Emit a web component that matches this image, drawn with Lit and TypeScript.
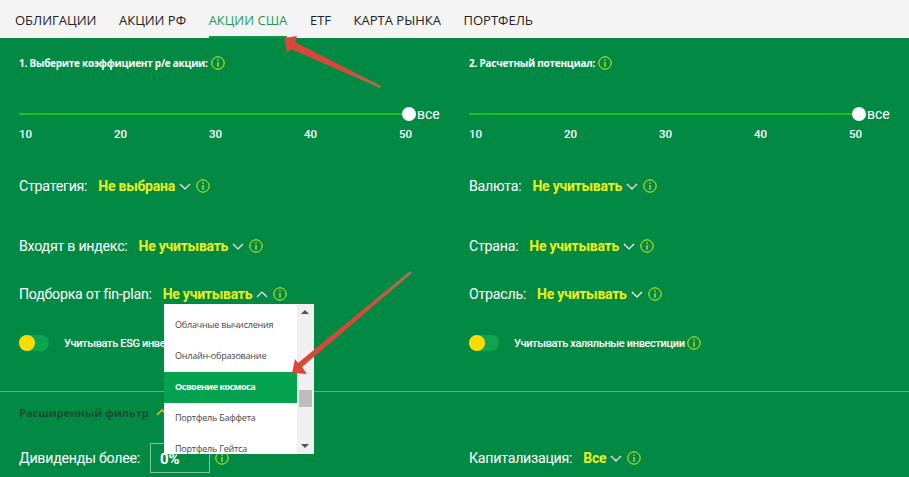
import {css, html, LitElement, svg} from "lit";
import {customElement} from "lit/decorators.js";

const tabs = ["ОБЛИГАЦИИ", "АКЦИИ РФ", "АКЦИИ США", "ETF", "КАРТА РЫНКА", "ПОРТФЕЛЬ"];
const ticks = [10, 20, 30, 40, 50];
const options = ["Облачные вычисления", "Онлайн-образование", "Освоение космоса", "Портфель Баффета", "Портфель Гейтса"];

const info = html`<svg class="info" viewBox="0 0 14 14" width="14" height="14">
  <circle cx="7" cy="7" r="6.2" fill="none" stroke="#d8f01c" stroke-width="1"></circle>
  <path d="M7 3.2v1.6M7 6v4.8" stroke="#d8f01c" stroke-width="1.2" fill="none"></path>
</svg>`;

const chevron = (up = false) => html`<svg class="chev" viewBox="0 0 12 7" width="12" height="7">
  <path d=${up ? "M1 6l5-5 5 5" : "M1 1l5 5 5-5"} fill="none" stroke="#fff" stroke-width="1.2"></path>
</svg>`;

@customElement("app-root")
export class AppRoot extends LitElement {
  static override styles = css`
    :host {
      display: block;
      position: relative;
      width: 909px;
      height: 477px;
      overflow: hidden;
      background: #028a44;
      font-family: "Roboto", sans-serif;
      color: #fff;
    }
    .tabs {
      display: flex;
      gap: 22.6px;
      height: 38px;
      padding-left: 15px;
      background: #f4f4f4;
      color: #222;
      font-family: "Open Sans", sans-serif;
      font-size: 13px;
      box-sizing: border-box;
    }
    .tab {
      height: 38px;
      line-height: 40px;
      box-sizing: border-box;
    }
    .tab.active {
      color: #1f9a56;
      font-weight: 500;
      border-bottom: 2px solid #14934e;
    }
    .row {
      display: grid;
      grid-template-columns: 450px 440px;
      padding-left: 19px;
      align-items: center;
    }
    .h50 { height: 50px; }
    .h58 { height: 58px; }
    .h80 { height: 80px; }
    .h40 { height: 40px; }
    .h56 { height: 56px; }
    .h42 { height: 42px; }
    .adv { height: 38px; margin-top: 1px; }
    .last { height: 40px; margin-top: 7px; }
    .title {
      display: flex;
      align-items: center;
      gap: 3px;
      font-family: "Open Sans", sans-serif;
      font-size: 10px;
      font-weight: 700;
      letter-spacing: -0.25px;
    }
    .slider {
      align-self: start;
      padding-top: 19px;
    }
    .track {
      display: flex;
      align-items: center;
      height: 14px;
    }
    .line {
      flex: none;
      width: 383px;
      height: 2px;
      background: #1cc41c;
    }
    .knob {
      width: 14px;
      height: 14px;
      border-radius: 50%;
      background: #fff;
      flex: none;
    }
    .all {
      margin-left: 1px;
      font-size: 14px;
      line-height: 14px;
    }
    .ticks {
      display: flex;
      margin-top: 6px;
      font-size: 11.5px;
      font-weight: 500;
      line-height: 14px;
    }
    .ticks span {
      flex: none;
      width: 95px;
    }
    .filter {
      display: flex;
      align-items: center;
      font-size: 14.2px;
      letter-spacing: -0.25px;
      position: relative;
    }
    .value {
      margin-left: 11px;
      color: #ecf01a;
      font-weight: 700;
      font-size: 14px;
    }
    .chev { margin-left: 4px; flex: none; }
    .info { margin-left: 5px; flex: none; }
    .title .info { margin-left: 0; }
    .toggle {
      display: flex;
      align-items: center;
      font-size: 11px;
      font-weight: 500;
      letter-spacing: -0.35px;
    }
    .switch {
      width: 30px;
      height: 16px;
      border-radius: 8px;
      background: #0da350;
      margin-right: 15px;
      flex: none;
    }
    .switch i {
      display: block;
      width: 16px;
      height: 16px;
      border-radius: 50%;
      background: #ffdc00;
    }
    .toggle .info { margin-left: 2px; }
    .divider {
      height: 1px;
      margin-top: 27px;
      background: rgba(255, 255, 255, 0.35);
    }
    .adv-title {
      display: flex;
      align-items: center;
      font-family: "Open Sans", sans-serif;
      font-size: 11px;
      font-weight: 700;
      color: #1c4a33;
    }
    .adv-title .chev { margin-left: 7px; }
    .input {
      width: 60px;
      height: 30px;
      margin-left: 10px;
      border: 1px solid rgba(255, 255, 255, 0.5);
      box-sizing: border-box;
      padding-left: 9px;
      font-size: 15px;
      font-weight: 700;
      line-height: 30px;
    }
    .dropdown {
      position: absolute;
      left: 164px;
      top: 304px;
      width: 150px;
      height: 150px;
      display: flex;
      background: #fff;
      overflow: hidden;
      color: #444;
    }
    .list {
      width: 133px;
      padding-top: 6px;
      font-family: "Open Sans", sans-serif;
      font-size: 9px;
      letter-spacing: -0.2px;
    }
    .option {
      height: 31px;
      line-height: 29px;
      padding-left: 11px;
      white-space: nowrap;
    }
    .option.selected {
      background: #05a24f;
      color: #fff;
      font-weight: 700;
      letter-spacing: -0.45px;
    }
    .bar {
      position: relative;
      width: 17px;
      background: #f0f0f0;
    }
    .thumb {
      position: absolute;
      left: 2px;
      top: 86px;
      width: 13px;
      height: 17px;
      background: #bdbdbd;
    }
    .step {
      position: absolute;
      left: 4px;
      width: 0;
      height: 0;
      border-left: 4px solid transparent;
      border-right: 4px solid transparent;
    }
    .step.up { top: 6px; border-bottom: 4px solid #505050; }
    .step.down { bottom: 6px; border-top: 4px solid #505050; }
    .arrows {
      position: absolute;
      inset: 0;
      pointer-events: none;
    }
  `;

  private slider() {
    return html`<div class="slider">
      <div class="track"><div class="line"></div><div class="knob"></div><span class="all">все</span></div>
      <div class="ticks">${ticks.map((t) => html`<span>${t}</span>`)}</div>
    </div>`;
  }

  private filter(label: string, value: string, up = false) {
    return html`<div class="filter">
      <span>${label}</span><span class="value">${value}</span>${chevron(up)}${info}
    </div>`;
  }

  override render() {
    return html`
      <nav class="tabs">
        ${tabs.map((t) => html`<div class="tab ${t === "АКЦИИ США" ? "active" : ""}">${t}</div>`)}
      </nav>
      <div class="row h50">
        <div class="title">1. Выберите коэффициент р/е акции: ${info}</div>
        <div class="title">2. Расчетный потенциал: ${info}</div>
      </div>
      <div class="row h58">${this.slider()}${this.slider()}</div>
      <div class="row h80">
        ${this.filter("Стратегия:", "Не выбрана")}
        ${this.filter("Валюта:", "Не учитывать")}
      </div>
      <div class="row h40">
        ${this.filter("Входят в индекс:", "Не учитывать")}
        ${this.filter("Страна:", "Не учитывать")}
      </div>
      <div class="row h56">
        ${this.filter("Подборка от fin-plan:", "Не учитывать", true)}
        ${this.filter("Отрасль:", "Не учитывать")}
      </div>
      <div class="row h42">
        <div class="toggle"><div class="switch"><i></i></div>Учитывать ESG инвестиции${info}</div>
        <div class="toggle"><div class="switch"><i></i></div>Учитывать халяльные инвестиции${info}</div>
      </div>
      <div class="divider"></div>
      <div class="row adv">
        <div class="adv-title">Расширенный фильтр <svg class="chev" viewBox="0 0 12 7" width="12" height="7"><path d="M1 6l5-5 5 5" fill="none" stroke="#d8c81c" stroke-width="1.5"></path></svg></div>
      </div>
      <div class="row last">
        <div class="filter"><span>Дивиденды более:</span><div class="input">0%</div>${info}</div>
        ${this.filter("Капитализация:", "Все")}
      </div>
      <div class="dropdown">
        <div class="list">
          ${options.map((o, i) => html`<div class="option ${i === 2 ? "selected" : ""}">${o}</div>`)}
        </div>
        <div class="bar"><div class="step up"></div><div class="thumb"></div><div class="step down"></div></div>
      </div>
      <svg class="arrows" width="909" height="477" viewBox="0 0 909 477">
        ${svg`<defs>
          <linearGradient id="a1" gradientUnits="userSpaceOnUse" x1="284" y1="38" x2="381" y2="87">
            <stop offset="0.6" stop-color="#d9473a"></stop><stop offset="1" stop-color="#a8734f"></stop>
          </linearGradient>
          <linearGradient id="a2" gradientUnits="userSpaceOnUse" x1="292" y1="373" x2="411" y2="272">
            <stop offset="0.55" stop-color="#d9473a"></stop><stop offset="1" stop-color="#a8734f"></stop>
          </linearGradient>
        </defs>
        <polygon points="284,38 297,36 295,42 381,86 380,88 291,49 287,53" fill="url(#a1)"></polygon>
        <polygon points="292,373 307,374 302,367 412,273 410,271 298,363 295,359" fill="url(#a2)"></polygon>`}
      </svg>
    `;
  }
}
